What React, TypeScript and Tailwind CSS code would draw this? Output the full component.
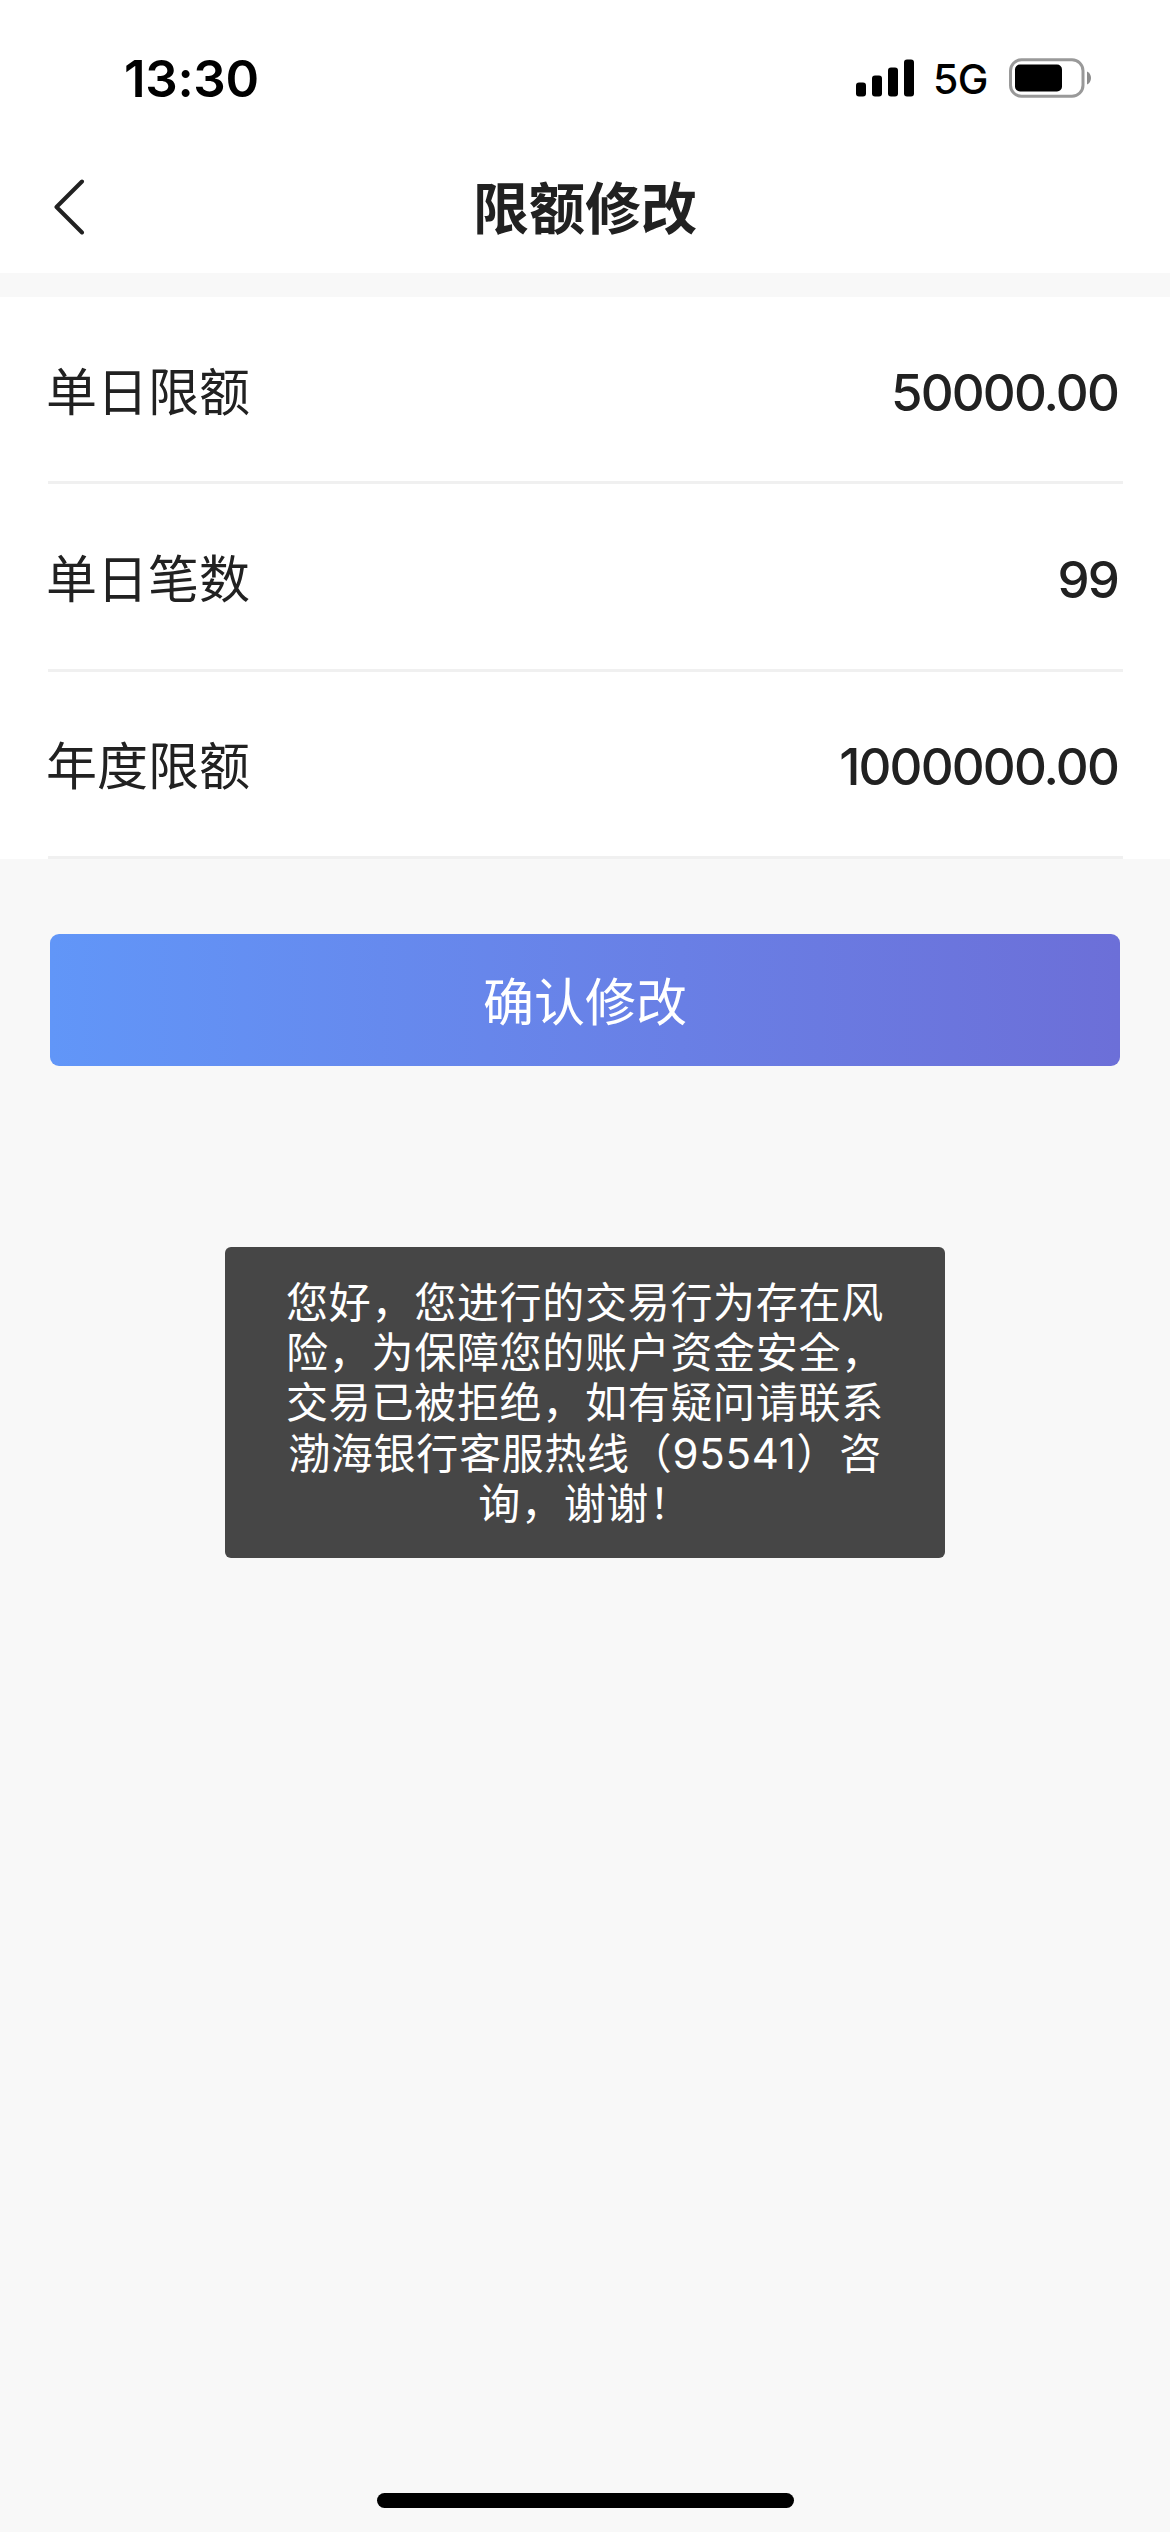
const limits = [
  { label: '单日限额', value: '50000.00' },
  { label: '单日笔数', value: '99' },
  { label: '年度限额', value: '1000000.00' },
];

const toastLines = [
  '您好，您进行的交易行为存在风',
  '险，为保障您的账户资金安全，',
  '交易已被拒绝，如有疑问请联系',
  '渤海银行客服热线（95541）咨',
  '询，谢谢！',
];

function StatusBar() {
  return (
    <div className="flex h-[141px] items-center justify-between pr-[78px] pl-[124px] pt-[15px] text-black">
      <span className="text-[51px] leading-none font-semibold tracking-[-0.3px]">13:30</span>
      <div className="flex items-center">
        <svg width="58" height="38" viewBox="0 0 58 38" fill="currentColor">
          <rect x="0" y="23.5" width="10" height="14" rx="3" />
          <rect x="16" y="16.5" width="10" height="21" rx="3" />
          <rect x="32" y="8.5" width="10" height="29" rx="3" />
          <rect x="48" y="0.5" width="10" height="37" rx="3" />
        </svg>
        <span className="ml-[19px] w-[56px] pt-[3px] text-[41px] leading-none font-medium tracking-[-0.5px]">5G</span>
        <svg className="ml-5" width="83" height="40" viewBox="0 0 83 40">
          <rect x="1.5" y="1.8" width="72.5" height="36.4" rx="11" fill="none" stroke="#999" strokeWidth="3" />
          <rect x="6" y="6.5" width="47" height="27" rx="5" fill="#000" />
          <path d="M78 13.5c2.5 1.2 4 3.5 4 6.5s-1.5 5.3-4 6.5z" fill="#8c8c8c" />
        </svg>
      </div>
    </div>
  );
}

export default function App() {
  return (
    <div className="relative flex h-[2532px] w-[1170px] flex-col bg-[#f8f8f8] font-['Inter','Noto_Sans_CJK_SC',sans-serif] text-[#212121]">
      <header className="h-[273px] bg-white">
        <StatusBar />
        <div className="grid h-[132px] grid-cols-[1fr_auto_1fr] items-center">
          <svg className="ml-[52px]" width="34" height="56" viewBox="0 0 34 56" fill="none" stroke="currentColor" strokeWidth="4" strokeLinecap="round" strokeLinejoin="round">
            <path d="M30 2.5 4.5 28 30 53.5" />
          </svg>
          <h1 className="pt-1 text-[56px] leading-none font-bold">限额修改</h1>
        </div>
      </header>

      {/* Limit rows */}
      <section className="mt-6 bg-white">
        {limits.map((item) => (
          <div
            key={item.label}
            className="mr-[47px] ml-12 flex h-[187.33px] items-center justify-between border-b-[3px] border-[#f0f0f0] pt-1.5 pr-[5px]"
          >
            <span className="-ml-0.5 text-[51px] leading-none">{item.label}</span>
            <span className="text-[51px] leading-none font-medium tracking-[-1.85px]">{item.value}</span>
          </div>
        ))}
      </section>

      <button className="mx-[50px] mt-[75px] h-[132px] rounded-[9px] bg-linear-to-r from-[#6196f8] to-[#6c6fd8] pt-1.5 text-[51px] leading-none text-white">
        确认修改
      </button>

      {/* Toast */}
      <div className="absolute top-[1247px] left-[225px] flex h-[311px] w-[720px] flex-col justify-center rounded-md bg-[#464646] pt-0.5 text-center text-[42px] leading-[50.2px] tracking-[0.7px] text-white">
        {toastLines.map((line) => (
          <p key={line} className="whitespace-nowrap">{line}</p>
        ))}
      </div>

      <div className="mx-auto mt-auto mb-6 h-[15px] w-[417px] rounded-full bg-black" />
    </div>
  );
}
